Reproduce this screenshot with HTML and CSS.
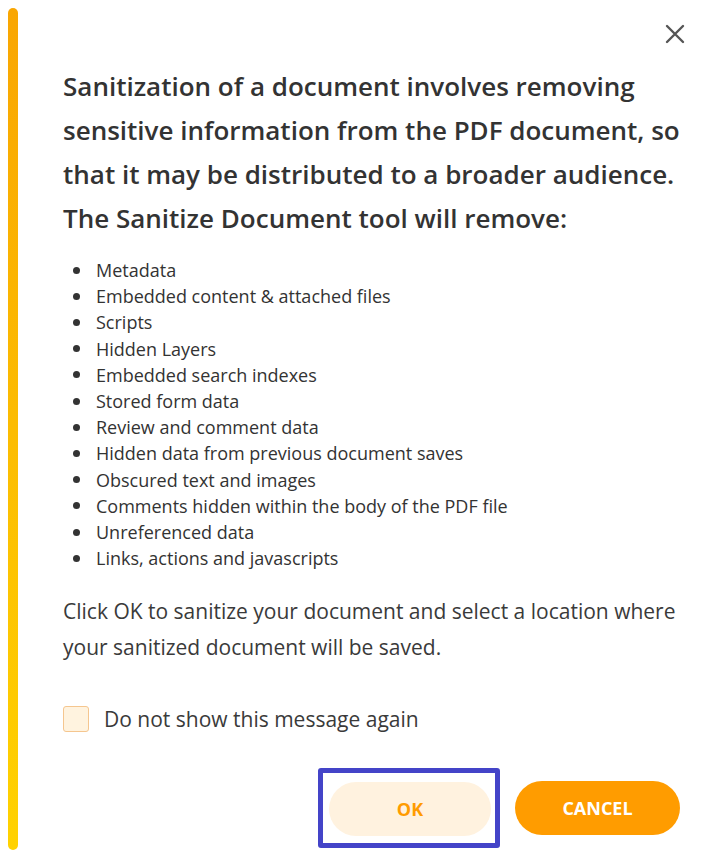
FILE: index.html
```html
<!DOCTYPE html>
<html>
<head>
    <title>Sanitize Document</title>
    <link rel="stylesheet" href="styles.css">
</head>
<body>
    <div class="dialog">
        <div class="accent-bar"></div>
        <div class="content">
            <div class="top-row">
                <button class="close-btn" aria-label="Close">
                    <svg width="20" height="20" viewBox="0 0 20 20">
                        <path d="M2 2 L18 18 M18 2 L2 18" stroke="#555" stroke-width="2.4" stroke-linecap="round"/>
                    </svg>
                </button>
            </div>

            <h2 class="intro">Sanitization of a document involves removing sensitive information from the PDF document, so that it may be distributed to a broader audience. The Sanitize Document tool will remove:</h2>

            <ul class="remove-list">
                <li>Metadata</li>
                <li>Embedded content &amp; attached files</li>
                <li>Scripts</li>
                <li>Hidden Layers</li>
                <li>Embedded search indexes</li>
                <li>Stored form data</li>
                <li>Review and comment data</li>
                <li>Hidden data from previous document saves</li>
                <li>Obscured text and images</li>
                <li>Comments hidden within the body of the PDF file</li>
                <li>Unreferenced data</li>
                <li>Links, actions and javascripts</li>
            </ul>

            <p class="note">Click OK to sanitize your document and select a location where your sanitized document will be saved.</p>

            <label class="dont-show">
                <input type="checkbox">
                <span class="box"></span>
                <span>Do not show this message again</span>
            </label>

            <div class="actions">
                <div class="focus-ring">
                    <button class="btn btn-ok">OK</button>
                </div>
                <button class="btn btn-cancel">CANCEL</button>
            </div>
        </div>
    </div>
</body>
</html>
```

FILE: styles.css
```css
body {
    margin: 0;
    background: #ffffff;
    font-family: 'Open Sans', 'Noto Sans', sans-serif;
    color: #333333;
}

.dialog {
    display: flex;
    width: 702px;
    height: 856px;
    box-sizing: border-box;
    padding: 8px 0 6px 8px;
}

.accent-bar {
    width: 10px;
    flex-shrink: 0;
    border-radius: 5px;
    background: linear-gradient(to bottom, #f9a602, #ffd200);
}

.content {
    flex: 1;
    padding: 0 22px 0 45px;
}

.top-row {
    display: flex;
    justify-content: flex-end;
    height: 56px;
    padding-top: 16px;
    box-sizing: border-box;
}

.close-btn {
    border: none;
    background: none;
    padding: 0;
    width: 20px;
    height: 20px;
    margin-right: -5px;
    cursor: pointer;
}

.intro {
    margin: 0;
    font-size: 26px;
    font-weight: 600;
    line-height: 44px;
    color: #333333;
}

.remove-list {
    list-style: none;
    margin: 17px 0 0;
    padding-left: 10px;
    font-size: 18px;
    line-height: 26.2px;
    color: #333333;
}

.remove-list li {
    display: flex;
    align-items: center;
}

.remove-list li::before {
    content: "";
    width: 7px;
    height: 7px;
    border-radius: 50%;
    background: #333333;
    margin-right: 16px;
    flex-shrink: 0;
}

.note {
    margin: 22px 0 0;
    font-size: 21px;
    line-height: 36px;
    color: #3a3a3a;
}

.dont-show {
    display: flex;
    align-items: center;
    gap: 15px;
    margin-top: 40px;
    font-size: 21px;
    color: #3a3a3a;
}

.dont-show input {
    display: none;
}

.box {
    width: 24px;
    height: 24px;
    border: 1px solid #f5c68f;
    border-radius: 3px;
    background: #fff3df;
}

.actions {
    display: flex;
    justify-content: flex-end;
    align-items: center;
    gap: 15px;
    margin-top: 35px;
}

.focus-ring {
    border: 5px solid #4444c8;
    border-radius: 3px;
    padding: 9px 4px 7px 6px;
}

.btn {
    border: none;
    height: 54px;
    border-radius: 27px;
    font-family: inherit;
    font-size: 18px;
    font-weight: 700;
    cursor: pointer;
}

.btn-ok {
    width: 162px;
    background: #fff2df;
    color: #ff9c00;
}

.btn-cancel {
    width: 165px;
    background: #ff9c00;
    color: #ffffff;
}
```
